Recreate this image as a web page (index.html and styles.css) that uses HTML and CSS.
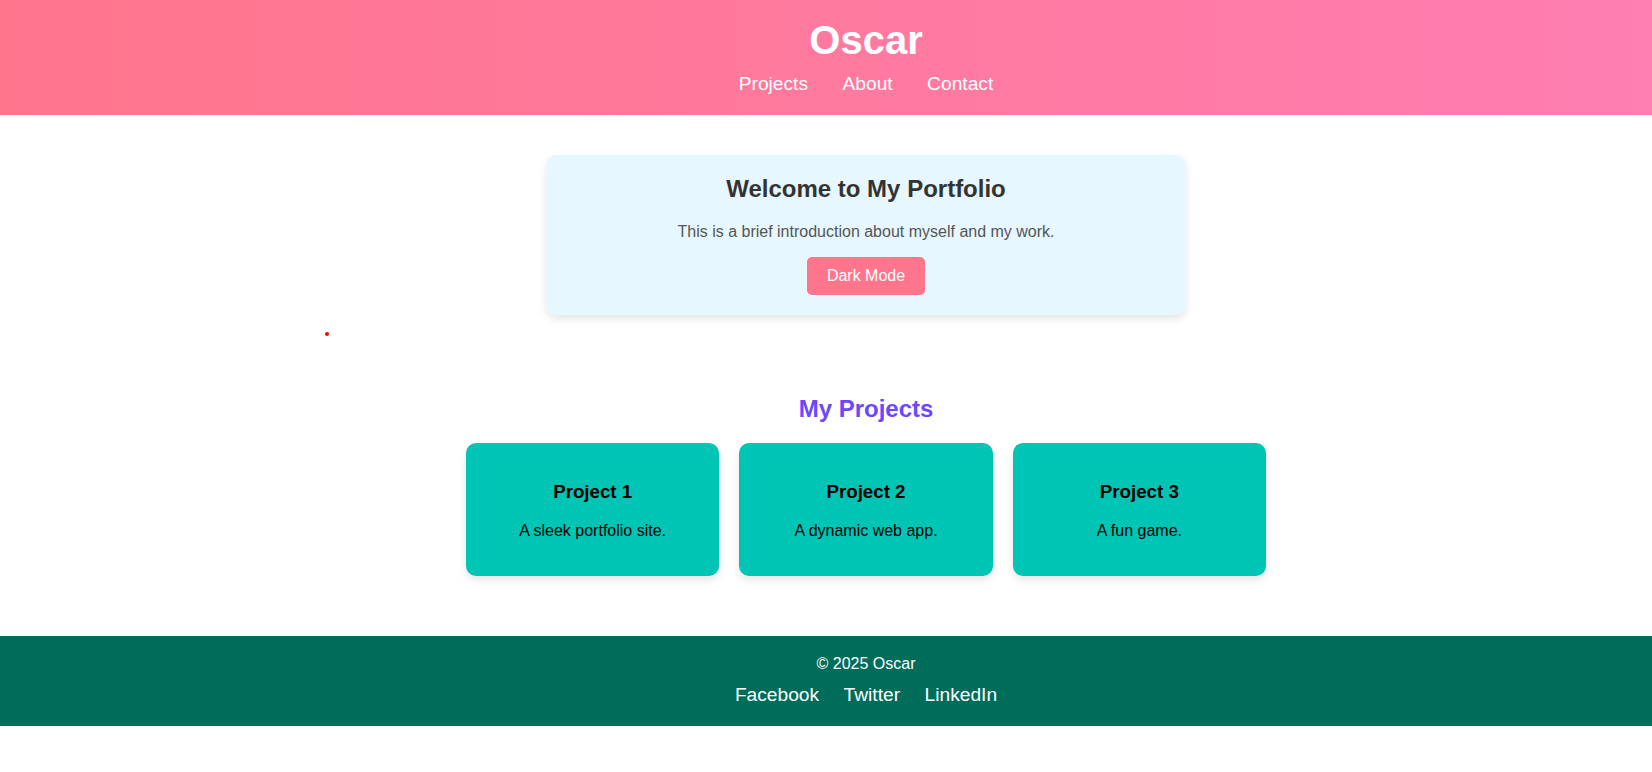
FILE: index.html
```html
<!DOCTYPE html>
<html lang="en">
<head>
<meta charset="utf-8">
<title>Oscar - Portfolio</title>
<link rel="stylesheet" href="styles.css">
</head>
<body>
<div class="cursor-dot"></div>
<header class="site-header">
  <h1 class="site-title">Oscar</h1>
  <nav class="site-nav">
    <a href="#projects">Projects</a>
    <a href="#about">About</a>
    <a href="#contact">Contact</a>
  </nav>
</header>
<main>
  <section class="intro" id="about">
    <h2 class="intro-title">Welcome to My Portfolio</h2>
    <p class="intro-text">This is a brief introduction about myself and my work.</p>
    <button class="mode-btn" type="button">Dark Mode</button>
  </section>
  <section class="projects" id="projects">
    <h2 class="projects-title">My Projects</h2>
    <div class="project-grid">
      <div class="project-card">
        <h3 class="project-name">Project 1</h3>
        <p class="project-desc">A sleek portfolio site.</p>
      </div>
      <div class="project-card">
        <h3 class="project-name">Project 2</h3>
        <p class="project-desc">A dynamic web app.</p>
      </div>
      <div class="project-card">
        <h3 class="project-name">Project 3</h3>
        <p class="project-desc">A fun game.</p>
      </div>
    </div>
  </section>
</main>
<footer class="site-footer" id="contact">
  <p class="copyright">&copy; 2025 Oscar</p>
  <div class="social">
    <a href="#">Facebook</a>
    <a href="#">Twitter</a>
    <a href="#">LinkedIn</a>
  </div>
</footer>
</body>
</html>
```
FILE: styles.css
```css
html {
  overflow-x: hidden;
}

body {
  margin: 0;
  min-width: 1732px;
  font-family: "Liberation Sans", Arial, sans-serif;
  background: #ffffff;
  color: #000;
  position: relative;
}

.cursor-dot {
  position: absolute;
  left: 325px;
  top: 332px;
  width: 4px;
  height: 4px;
  border-radius: 50%;
  background: #ff0000;
}

.site-header {
  background: linear-gradient(to right, #ff758c, #ff7eb3);
  color: #fff;
  text-align: center;
  padding: 18px 0 20px;
}

.site-title {
  margin: 0 0 10px;
  font-size: 40px;
  font-weight: bold;
}

.site-nav a {
  color: #fff;
  text-decoration: none;
  font-size: 19.2px;
  margin: 0 15px;
}

.intro {
  max-width: 600px;
  margin: 40px auto;
  padding: 20px;
  background: #e6f7ff;
  border-radius: 10px;
  box-shadow: 0 4px 8px rgba(0, 0, 0, 0.1);
  text-align: center;
}

.intro-title {
  margin: 0 0 19.92px;
  font-size: 24px;
  color: #333;
}

.intro-text {
  margin: 16px 0;
  font-size: 16px;
  color: #555;
}

.mode-btn {
  background: #ff758c;
  color: #fff;
  border: none;
  border-radius: 5px;
  padding: 10px 20px;
  font-size: 16px;
  font-family: inherit;
  cursor: pointer;
}

.projects {
  padding: 20px;
  text-align: center;
}

.projects-title {
  margin: 19.92px 0;
  font-size: 24px;
  color: #6c47ff;
}

.project-grid {
  max-width: 800px;
  margin: 0 auto;
  display: grid;
  grid-template-columns: repeat(3, 1fr);
  gap: 20px;
}

.project-card {
  background: #00c4b4;
  border-radius: 10px;
  padding: 20px;
  box-shadow: 0 4px 8px rgba(0, 0, 0, 0.1);
  color: #000;
}

.project-name {
  margin: 18.72px 0;
  font-size: 18.72px;
}

.project-desc {
  margin: 16px 0;
  font-size: 16px;
}

.site-footer {
  margin-top: 40px;
  background: #006d5b;
  color: #fff;
  text-align: center;
  padding: 19px 0 20px;
}

.copyright {
  margin: 0 0 11px;
  font-size: 16px;
}

.social a {
  color: #fff;
  text-decoration: none;
  font-size: 19.2px;
  margin: 0 10px;
}
```
